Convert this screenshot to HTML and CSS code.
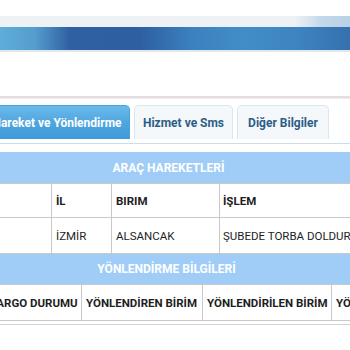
FILE: index.html
```html
<!DOCTYPE html>
<html>
<head>
<meta charset="utf-8">
<link rel="stylesheet" href="styles.css">
</head>
<body>
<div class="banner">
  <div class="banner-top"></div>
  <div class="banner-band"></div>
  <div class="banner-under"></div>
</div>
<div class="divider"></div>
<div class="shift">
  <div class="tabs">
    <div class="tab active">Hareket ve Yönlendirme</div>
    <div class="tab t2">Hizmet ve Sms</div>
    <div class="tab t3">Diğer Bilgiler</div>
  </div>
  <div class="tabline"></div>
  <table class="grid g1">
    <colgroup><col class="w1"><col class="w2"><col class="w3"><col class="w4"></colgroup>
    <tr><th class="band" colspan="4">ARAÇ HAREKETLERİ</th></tr>
    <tr class="hrow"><td></td><td>İL</td><td>BIRIM</td><td class="c4">İŞLEM</td></tr>
    <tr class="drow"><td></td><td>İZMİR</td><td>ALSANCAK</td><td class="c4">ŞUBEDE TORBA DOLDURULDU</td></tr>
  </table>
  <table class="grid g2">
    <colgroup><col class="v1"><col class="v2"><col class="v3"><col class="v4"></colgroup>
    <tr><th class="band" colspan="4">YÖNLENDİRME BİLGİLERİ</th></tr>
    <tr class="hrow"><td class="d1">KARGO DURUMU</td><td>YÖNLENDİREN BİRİM</td><td>YÖNLENDİRİLEN BİRİM</td><td>YÖNLENDİRME TARİHİ</td></tr>
  </table>
  <div class="endline"></div>
</div>
</body>
</html>
```
FILE: styles.css
```css
html, body { margin: 0; padding: 0; background: #fff; }
body { width: 350px; height: 350px; overflow: hidden; font-family: Roboto, "Liberation Sans", sans-serif; }
.banner { margin-top: 16px; }
.banner-top { height: 11px; background: linear-gradient(90deg, #eef2f4 0%, #eef2f4 84%, #dfe9f1 87%, #c3d8ea 92%, #b9d1e6 100%); }
.banner-band { height: 23px; background: linear-gradient(90deg, #5fadda 0%, #549dcd 10%, #4684bd 14%, #2f60a2 20%, #2e5fa1 40%, #3b81bf 55%, #428dc7 70%, #3d84c0 85%, #3570ae 100%); }
.banner-under { height: 2px; background: #e0e8ee; }
.divider { margin-top: 44px; height: 2px; background: #e4dcde; border-bottom: 1px solid #f0ecee; }
.shift { margin-left: -16px; width: 420px; }
.tabs { display: flex; gap: 4px; margin-top: 6px; height: 34px; align-items: stretch; }
.tab { flex: none; display: flex; align-items: center; justify-content: center; white-space: nowrap; font-size: 12px; font-weight: 700; color: #2d5d87; background: #f4f8fb; border: 1px solid #dbe7ef; border-bottom: none; border-radius: 5px 5px 0 0; box-sizing: border-box; }
.tab.active { color: #fff; background: linear-gradient(180deg, #6dbaea 0%, #4ea6df 50%, #3e9ad7 100%); border-color: #4aa2dc; width: 146px; }
.t2 { width: 99px; }
.t3 { width: 92px; }
.tabline { margin-top: 4px; height: 1px; background: #c9ddec; }
.grid { border-collapse: collapse; table-layout: fixed; width: 420px; font-size: 11.5px; color: #1e1e1e; }
.w1 { width: 67px; } .w2 { width: 60px; } .w3 { width: 108px; } .w4 { width: 185px; }
.v1 { width: 97px; } .v2 { width: 121px; } .v3 { width: 129px; } .v4 { width: 73px; }
.g1 { margin-top: 8px; }
.band { background: #9fcdf8; color: #fff; font-weight: 700; font-size: 12px; height: 31px; padding: 0 52px 0 0; text-align: center; }
.g2 .band { height: 30px; padding-right: 56px; }
.grid td { border: 1px solid #c9c9c9; padding: 0 4px; white-space: nowrap; overflow: hidden; }
.hrow td { font-weight: 700; height: 33px; }
.drow td { height: 35px; }
.c4 { padding-left: 3px !important; }
.d1 { text-align: right; padding-right: 5px !important; }
.g2 .hrow td { height: 35px; }
.endline { margin-top: 3px; height: 1px; background: #d4d4d4; }
```
